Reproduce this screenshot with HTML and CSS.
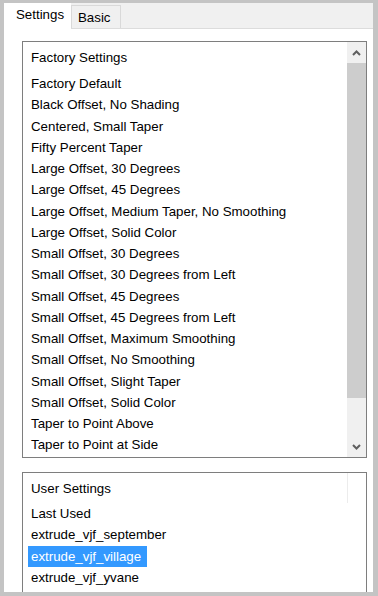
FILE: index.html
```html
<!DOCTYPE html>
<html>
<head>
<meta charset="utf-8">
<link rel="stylesheet" href="styles.css">
</head>
<body>
<div class="frame">
  <div class="tabs">
    <div class="tab active">Settings</div>
    <div class="tab">Basic</div>
  </div>
  <div class="panel">
    <div class="list factory">
      <div class="items">
        <div class="header">Factory Settings</div>
        <div class="item">Factory Default</div>
        <div class="item">Black Offset, No Shading</div>
        <div class="item">Centered, Small Taper</div>
        <div class="item">Fifty Percent Taper</div>
        <div class="item">Large Offset, 30 Degrees</div>
        <div class="item">Large Offset, 45 Degrees</div>
        <div class="item">Large Offset, Medium Taper, No Smoothing</div>
        <div class="item">Large Offset, Solid Color</div>
        <div class="item">Small Offset, 30 Degrees</div>
        <div class="item">Small Offset, 30 Degrees from Left</div>
        <div class="item">Small Offset, 45 Degrees</div>
        <div class="item">Small Offset, 45 Degrees from Left</div>
        <div class="item">Small Offset, Maximum Smoothing</div>
        <div class="item">Small Offset, No Smoothing</div>
        <div class="item">Small Offset, Slight Taper</div>
        <div class="item">Small Offset, Solid Color</div>
        <div class="item">Taper to Point Above</div>
        <div class="item">Taper to Point at Side</div>
      </div>
      <div class="scrollbar">
        <div class="sb-btn">
          <svg width="9" height="6" viewBox="0 0 9 6"><path d="M1 5 L4.5 1.5 L8 5" fill="none" stroke="#5f5f5f" stroke-width="2"/></svg>
        </div>
        <div class="thumb"></div>
        <div class="track"></div>
        <div class="sb-btn">
          <svg width="9" height="6" viewBox="0 0 9 6"><path d="M1 1 L4.5 4.5 L8 1" fill="none" stroke="#5f5f5f" stroke-width="2"/></svg>
        </div>
      </div>
    </div>
    <div class="list user">
      <div class="items">
        <div class="header">User Settings</div>
        <div class="item">Last Used</div>
        <div class="item">extrude_vjf_september</div>
        <div class="item"><span class="selected">extrude_vjf_village</span></div>
        <div class="item">extrude_vjf_yvane</div>
      </div>
      <div class="ghost-bar"></div>
    </div>
  </div>
</div>
</body>
</html>
```

FILE: styles.css
```css
html, body {
  margin: 0;
  padding: 0;
}
body {
  font-family: "Liberation Sans", Arial, sans-serif;
  font-size: 13.3px;
  color: #000;
  background: #c4c4c4;
}
.frame {
  width: 378px;
  height: 596px;
  box-sizing: border-box;
  border-style: solid;
  border-color: #c4c4c4;
  border-width: 3px 5px 4px 4px;
  display: flex;
  flex-direction: column;
  overflow: hidden;
}
.tabs {
  display: flex;
  align-items: flex-start;
  height: 25px;
  background: #f0f0f0;
  border-bottom: 1px solid #dcdcdc;
  flex: none;
}
.tab {
  box-sizing: border-box;
  margin-top: 2px;
  height: 23px;
  padding: 1px 9px 0 6px;
  line-height: 22px;
  background: #f0f0f0;
  border: 1px solid #d9d9d9;
  border-bottom: none;
}
.tab.active {
  margin-top: 0;
  height: 26px;
  width: 67px;
  padding: 0 0 0 12px;
  line-height: 23px;
  background: #fff;
  border: none;
  margin-bottom: -1px;
}
.panel {
  flex: 1;
  min-height: 0;
  background: #fff;
  padding: 12px 6px 0 18px;
  display: flex;
  flex-direction: column;
  gap: 14px;
  overflow: hidden;
}
.list {
  box-sizing: border-box;
  border: 1px solid #7e7e7e;
  display: flex;
  flex: none;
  background: #fff;
}
.factory {
  height: 417px;
}
.user {
  height: 140px;
}
.items {
  flex: 1;
  padding: 5px 0 0 8px;
  overflow: hidden;
  white-space: nowrap;
}
.header {
  line-height: 21px;
  margin-bottom: 5px;
}
.user .items {
  padding-top: 5px;
}
.user .header {
  margin-bottom: 4px;
}
.item {
  line-height: 21.25px;
  height: 21.25px;
}
.selected {
  display: inline-block;
  margin-left: -3px;
  padding: 0 6px 0 3px;
  background: #3399ff;
  color: #fff;
}
.scrollbar {
  width: 19px;
  background: #f0f0f0;
  display: flex;
  flex-direction: column;
}
.sb-btn {
  height: 21px;
  display: flex;
  align-items: center;
  justify-content: center;
  flex: none;
}
.thumb {
  height: 335px;
  background: #cdcdcd;
  flex: none;
}
.track {
  flex: 1;
}
.ghost-bar {
  width: 18px;
  height: 30px;
  border-left: 1px solid #ececec;
}
```
